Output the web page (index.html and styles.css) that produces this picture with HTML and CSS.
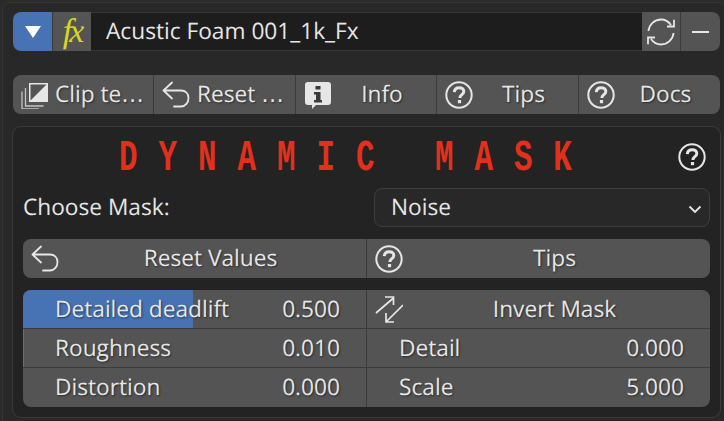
FILE: index.html
```html
<!DOCTYPE html>
<html lang="en">
<head>
<meta charset="utf-8">
<title>Dynamic Mask</title>
<link rel="stylesheet" href="styles.css">
</head>
<body>
<svg class="defs" width="0" height="0" aria-hidden="true">
  <defs>
    <symbol id="help" viewBox="0 0 28 28">
      <circle cx="14" cy="14" r="12.700" fill="none" stroke="currentColor" stroke-width="2"/>
      <path d="M9.300 11.200c.2-2.800 2.300-4.500 4.900-4.500 2.700 0 4.600 1.600 4.600 3.800 0 1.800-1.100 2.700-2.400 3.600-1.100.8-1.500 1.300-1.500 2.900" fill="none" stroke="currentColor" stroke-width="3"/>
      <rect x="12.900" y="19" width="3.200" height="3.200" fill="currentColor"/>
    </symbol>
    <symbol id="undo" viewBox="0 0 28 28">
      <path d="M10 1.500 1.500 9.500l8.500 8M1.500 9.500H19c4.500 0 7.500 3 7.500 7.500s-3 8.500-7.500 8.500h-7" fill="none" stroke="currentColor" stroke-width="1.800" stroke-linecap="round" stroke-linejoin="round"/>
    </symbol>
  </defs>
</svg>
<main class="window">
  <header class="toprow">
    <button class="seg seg-blue"><svg class="tri" viewBox="0 0 16 12"><path d="M0 0h16L8 12z" fill="#fff"/></svg></button>
    <button class="seg seg-fx"><span class="fx">fx</span></button>
    <div class="namefield">Acustic Foam 001_1k_Fx</div>
    <button class="seg seg-icon">
      <svg class="ic" viewBox="0 0 28 28"><path d="M1.500 13C2 6.500 7.500 1.500 14 1.500c4 0 7.500 2 10 5.500M27 1.800V8.500h-7M26.500 15c-.5 6.500-6 11.500-12.500 11.500-4 0-7.500-2-10-5.500M1 26.200v-6.700h7" fill="none" stroke="#e6e6e6" stroke-width="1.800"/></svg>
    </button>
    <button class="seg seg-icon seg-end"><span class="minus"></span></button>
  </header>

  <nav class="tabs">
    <button class="tab tab-first">
      <svg class="ic" viewBox="0 0 28 28">
        <path d="M8 2h19v19H8z" fill="#e6e6e6"/>
        <path d="M9.500 19.500 25.500 3.500H9.500z" fill="#545454"/>
        <path d="M4.500 7v18h18M1 10.500V28h17" fill="none" stroke="#c4c4c4" stroke-width="1.300"/>
      </svg>
      <span class="tab-label tight">Clip te<span class="ell">…</span></span>
    </button>
    <button class="tab">
      <svg class="ic"><use href="#undo"/></svg>
      <span class="tab-label tight tight-r">Reset <span class="ell">…</span></span>
    </button>
    <button class="tab">
      <svg class="ic" viewBox="0 0 28 28">
        <path d="M4 1h20a3 3 0 0 1 3 3v17a3 3 0 0 1-3 3H12l-4 4v-4H4a3 3 0 0 1-3-3V4a3 3 0 0 1 3-3z" fill="#e6e6e6"/>
        <path d="M11.500 5h5v3.500h-5zM10 11h6.500v8H18v2.500H10V19h2v-5.500h-2z" fill="#3a3a3a"/>
      </svg>
      <span class="tab-label">Info</span>
    </button>
    <button class="tab">
      <svg class="ic"><use href="#help"/></svg>
      <span class="tab-label">Tips</span>
    </button>
    <button class="tab tab-last">
      <svg class="ic"><use href="#help"/></svg>
      <span class="tab-label">Docs</span>
    </button>
  </nav>

  <section class="panel">
    <div class="titlerow">
      <h1 class="title">DYNAMIC MASK</h1>
      <svg class="ic title-help"><use href="#help"/></svg>
    </div>

    <div class="chooserow">
      <span class="choose-label">Choose Mask:</span>
      <div class="dropdown">
        <span class="dd-text">Noise</span>
        <svg class="chev" viewBox="0 0 14 9"><path d="M1.500 1.500 7 7l5.500-5.500" fill="none" stroke="#e6e6e6" stroke-width="1.800"/></svg>
      </div>
    </div>

    <div class="btnrow">
      <button class="wide wide-l"><svg class="ic"><use href="#undo"/></svg><span class="tab-label">Reset Values</span></button>
      <button class="wide wide-r"><svg class="ic"><use href="#help"/></svg><span class="tab-label">Tips</span></button>
    </div>

    <div class="params">
      <div class="param p-tl"><span class="fill"></span><span class="p-name">Detailed deadlift</span><span class="p-val">0.500</span></div>
      <button class="param p-tr p-btn"><svg class="ic" viewBox="0 0 28 28"><path d="M1 18 18.500 3M10 2h8.500v8M28 10 11 27M11 18v9h8" fill="none" stroke="#e6e6e6" stroke-width="1.700"/></svg><span class="tab-label">Invert Mask</span></button>
      <div class="param p-l p-sliver"><span class="p-name">Roughness</span><span class="p-val">0.010</span></div>
      <div class="param p-r"><span class="p-name">Detail</span><span class="p-val">0.000</span></div>
      <div class="param p-l p-bl"><span class="p-name">Distortion</span><span class="p-val">0.000</span></div>
      <div class="param p-r p-br"><span class="p-name">Scale</span><span class="p-val">5.000</span></div>
    </div>
  </section>
</main>
</body>
</html>
```

FILE: styles.css
```css
* { box-sizing: border-box; }
html, body { margin: 0; padding: 0; }
body {
  width: 724px;
  height: 421px;
  overflow: hidden;
  background: #2a2a2a;
  font-family: "Open Sans", sans-serif;
  font-size: 22.700px;
  text-rendering: geometricPrecision;
  color: #e6e6e6;
}
.defs { position: absolute; }
button {
  font: inherit;
  color: inherit;
  border: 0;
  margin: 0;
  padding: 0;
  text-rendering: inherit;
}
.window {
  width: 724px;
  height: 421px;
  background: #282828;
  border: 1px solid #333;
  border-radius: 8px 8px 0 0;
  margin-top: 2px;
  margin-left: 2px;
  padding: 9px 3px 0 10px;
}
.toprow {
  display: flex;
  height: 39px;
  width: 707px;
}
.seg {
  height: 39px;
  width: 38px;
  background: #545454;
  display: flex;
  align-items: center;
  justify-content: center;
  border-right: 1px solid #3a3a3a;
  flex: none;
}
.seg-blue { background: #4772b3; border-radius: 8px 0 0 8px; width: 39px; border-right: 0; }
.tri { width: 16px; height: 12px; }
.seg-fx { width: 39px; border-left: 1px solid #3a3a3a; border-right: 0; }
.fx {
  font-family: "Liberation Serif", serif;
  font-style: italic;
  font-size: 34px;
  color: #d8d820;
  letter-spacing: -3px;
  line-height: 1;
}
.namefield {
  width: 551px;
  background: #1d1d1d;
  border-top: 1px solid #363636;
  border-bottom: 1px solid #363636;
  padding-left: 15px;
  line-height: 35px;
  flex: none;
}
.seg-icon { width: 39px; }
.seg-end { border-right: 0; border-radius: 0 8px 8px 0; width: 39px; }
.minus { width: 17px; height: 2px; background: #e6e6e6; }
.ic { width: 28px; height: 28px; flex: none; color: #e6e6e6; }

.tabs {
  display: grid;
  grid-template-columns: 141px 142px 141px 142px 141px;
  height: 39px;
  width: 707px;
  margin-top: 24px;
}
.tab {
  display: flex;
  align-items: center;
  background: #545454;
  border-right: 1px solid #3a3a3a;
  padding-left: 8px;
  height: 39px;
  text-shadow: 1px 1px 2px rgba(0,0,0,.5);
}
.tab-first { border-radius: 8px 0 0 8px; }
.tab-last { border-right: 0; border-radius: 0 8px 8px 0; }
.tab-label { flex: 1; text-align: center; padding: 0 4px 2px 0; }
.tab-label.tight { padding: 0 0 2px 6px; text-align: left; white-space: nowrap; }
.tab-label.tight-r { padding-left: 7px; }
.ell { font-family: "DejaVu Sans", sans-serif; }

.panel {
  width: 709px;
  height: 292px;
  margin: 12px 0 0 -1px;
  border: 1px solid #3b3b3b;
  border-radius: 9px;
  background: #232323;
  padding: 0 10px;
}
.titlerow {
  height: 59px;
  display: flex;
  align-items: center;
  position: relative;
}
.title {
  margin: 0;
  width: 100%;
  text-align: left;
  font-family: "Liberation Mono", monospace;
  font-weight: 700;
  font-size: 44px;
  line-height: 65px;
  height: 59px;
  color: #e2301c;
  white-space: nowrap;
  letter-spacing: 30px;
  transform: translateX(-7px) scaleX(.7);
  transform-origin: 50% 50%;
}
.title-help { position: absolute; right: 4px; top: 16px; }
.chooserow {
  display: grid;
  grid-template-columns: 351px 336px;
  height: 39px;
  margin-top: 2px;
  align-items: center;
}
.choose-label { padding-bottom: 2px; }
.dropdown {
  height: 39px;
  border: 1px solid #3d3d3d;
  border-radius: 8px;
  background: #282828;
  display: flex;
  align-items: center;
  justify-content: space-between;
  padding: 0 7px 0 16px;
}
.dd-text { padding-bottom: 2px; }
.chev { width: 14px; height: 9px; margin-top: 3px; }
.btnrow {
  display: grid;
  grid-template-columns: 344px 343px;
  margin-top: 12px;
  height: 39px;
}
.wide {
  background: #545454;
  display: flex;
  align-items: center;
  padding-left: 8px;
  height: 39px;
  text-shadow: 1px 1px 2px rgba(0,0,0,.5);
}
.wide-l { border-radius: 8px 0 0 8px; border-right: 1px solid #3a3a3a; }
.wide-r { border-radius: 0 8px 8px 0; }
.params {
  display: grid;
  grid-template-columns: 344px 343px;
  grid-template-rows: 39px 39px 39px;
  margin-top: 12px;
}
.param {
  position: relative;
  display: flex;
  align-items: center;
  background: #545454;
  text-shadow: 1px 1px 2px rgba(0,0,0,.5);
  border-bottom: 1px solid #3a3a3a;
  justify-content: space-between;
  padding: 0 26px 0 32px;
}
.p-l, .p-tl { border-right: 1px solid #3a3a3a; }
.p-tl { border-radius: 8px 0 0 0; }
.p-tr { border-radius: 0 8px 0 0; }
.p-bl { border-radius: 0 0 0 8px; border-bottom: 0; }
.p-br { border-radius: 0 0 8px 0; border-bottom: 0; }
.p-btn { padding: 0 0 0 8px; justify-content: flex-start; }
.fill {
  position: absolute;
  left: 0; top: 0; bottom: 0;
  width: 170px;
  background: #4772b3;
  border-radius: 8px 0 0 0;
}
.p-name, .p-val { position: relative; padding-bottom: 2px; }
.p-sliver { box-shadow: inset 1px 0 0 #4772b3; }
```
